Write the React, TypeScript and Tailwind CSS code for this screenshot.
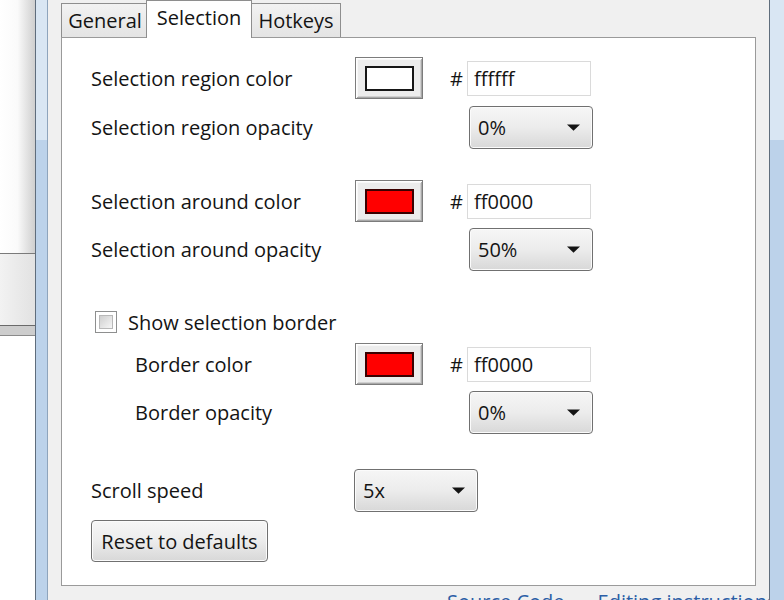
import React from "react";

function Caret() {
  return (
    <svg width="13" height="7" viewBox="0 0 13 7" className="block">
      <path d="M0 0.5H13L6.5 6.8Z" fill="#141414" />
    </svg>
  );
}

function Drop({ v }: { v: string }) {
  return (
    <div className="flex h-[43px] w-[124px] items-center justify-between rounded-[4px] border border-[#707070] bg-linear-to-b from-[#f6f6f6] via-[#ececec] to-[#d8d8d8] pl-[8px] pr-[12px] shadow-[inset_0_0_0_1px_#fbfbfb]">
      <span>{v}</span>
      <Caret />
    </div>
  );
}

function ColorBtn({ c }: { c: "white" | "red" }) {
  return (
    <div className="flex h-[42px] w-[68px] items-center justify-center border border-[#7c7c7c] bg-[#ececec] shadow-[inset_1px_1px_0_#ffffff,inset_-1px_-1px_0_#a8a8a8,inset_2px_2px_0_#f8f8f8,inset_-2px_-2px_0_#d0d0d0]">
      {c === "white" ? (
        <div className="h-[25px] w-[49px] border-2 border-[#161616] bg-white" />
      ) : (
        <div className="h-[25px] w-[49px] border-2 border-[#3a0000] bg-[#ff0000]" />
      )}
    </div>
  );
}

function Hex({ v }: { v: string }) {
  return (
    <>
      <div className="flex w-[44px] justify-end pr-[4px]">#</div>
      <div className="flex h-[35px] w-[124px] items-center border border-[#dadada] bg-white pl-[6px]">{v}</div>
    </>
  );
}

export default function App() {
  return (
    <div className="flex h-[600px] w-[784px] overflow-hidden bg-[#f0f0f0] font-['Open_Sans','Noto_Sans',sans-serif] text-[20px] leading-[27px] text-[#141414]">
      {/* background window on the left */}
      <div className="flex w-[35px] flex-col">
        <div className="h-[253px] bg-linear-to-r from-white via-[#fafafa] to-[#cfcfcf]" />
        <div className="h-px bg-[#7a7a7a]" />
        <div className="h-[71px] bg-linear-to-r from-[#f2f2f2] to-[#e2e2e2]" />
        <div className="h-px bg-[#6a6a6a]" />
        <div className="h-[9px] bg-[#cdcdcd]" />
        <div className="h-px bg-[#8a8a8a]" />
        <div className="flex-1 bg-white" />
      </div>
      {/* left window frame */}
      <div className="w-px bg-[#5f6d7c]" />
      <div className="flex w-[11px] flex-col">
        <div className="h-[140px] bg-[#d9e6f3]" />
        <div className="flex-1 bg-[#bcd2ea]" />
      </div>
      <div className="w-px bg-[#8ea4bc]" />

      {/* dialog */}
      <div className="flex w-[721px] flex-col px-[13px]">
        {/* tabs */}
        <div className="flex h-[37px] items-end">
          <div className="flex h-[34px] w-[85px] items-center justify-center border-l border-t border-[#8e8e8e] bg-linear-to-b from-[#f2f2f2] to-[#e4e4e4] pl-[2px]">
            General
          </div>
          <div className="relative z-10 -mb-px flex h-[38px] w-[106px] items-center justify-center border-x border-t border-[#8e8e8e] bg-white pb-[5px]">
            Selection
          </div>
          <div className="flex h-[34px] w-[89px] items-center justify-center border-r border-t border-[#8e8e8e] bg-linear-to-b from-[#f2f2f2] to-[#e4e4e4]">
            Hotkeys
          </div>
        </div>

        {/* panel */}
        <div className="flex h-[549px] flex-col border border-[#9a9a9a] bg-white pl-[29px] pt-[19px]">
          <div className="flex h-[42px] items-center">
            <div className="w-[264px]">Selection region color</div>
            <ColorBtn c="white" />
            <Hex v="ffffff" />
          </div>
          <div className="mt-[7px] flex h-[43px] items-center">
            <div className="w-[378px]">Selection region opacity</div>
            <Drop v="0%" />
          </div>

          <div className="mt-[31px] flex h-[42px] items-center">
            <div className="w-[264px]">Selection around color</div>
            <ColorBtn c="red" />
            <Hex v="ff0000" />
          </div>
          <div className="mt-[6px] flex h-[43px] items-center">
            <div className="w-[378px]">Selection around opacity</div>
            <Drop v="50%" />
          </div>

          <div className="mt-[40px] flex h-[22px] items-center pl-[4px]">
            <div className="h-[22px] w-[22px] border border-[#8e8f8f] bg-white p-[3px]">
              <div className="h-full w-full border border-[#b8b8b8] bg-linear-to-br from-[#cfcfcf] to-[#f6f6f6]" />
            </div>
            <span className="ml-[11px]">Show selection border</span>
          </div>

          <div className="mt-[10px] flex h-[42px] items-center">
            <div className="w-[264px] pl-[44px]">Border color</div>
            <ColorBtn c="red" />
            <Hex v="ff0000" />
          </div>
          <div className="mt-[6px] flex h-[43px] items-center">
            <div className="w-[378px] pl-[44px]">Border opacity</div>
            <Drop v="0%" />
          </div>

          <div className="mt-[35px] flex h-[43px] items-center">
            <div className="w-[263px]">Scroll speed</div>
            <Drop v="5x" />
          </div>
          <div className="mt-[8px] flex">
            <div className="flex h-[42px] w-[177px] items-center justify-center rounded-[4px] border border-[#707070] bg-linear-to-b from-[#f6f6f6] via-[#ececec] to-[#d8d8d8] shadow-[inset_0_0_0_1px_#fbfbfb]">
              Reset to defaults
            </div>
          </div>
        </div>

        {/* links below */}
        <div className="flex h-[14px] gap-[33px] whitespace-nowrap pl-[386px] pt-[6px] leading-[20px] text-[#2b5ea6]">
          <span>Source Code</span>
          <span>Editing instructions</span>
        </div>
      </div>

      {/* right window frame */}
      <div className="w-px bg-[#5f6d7c]" />
      <div className="flex w-[14px] flex-col">
        <div className="h-[140px] bg-[#d9e6f3]" />
        <div className="flex-1 bg-[#bcd2ea]" />
      </div>
    </div>
  );
}
